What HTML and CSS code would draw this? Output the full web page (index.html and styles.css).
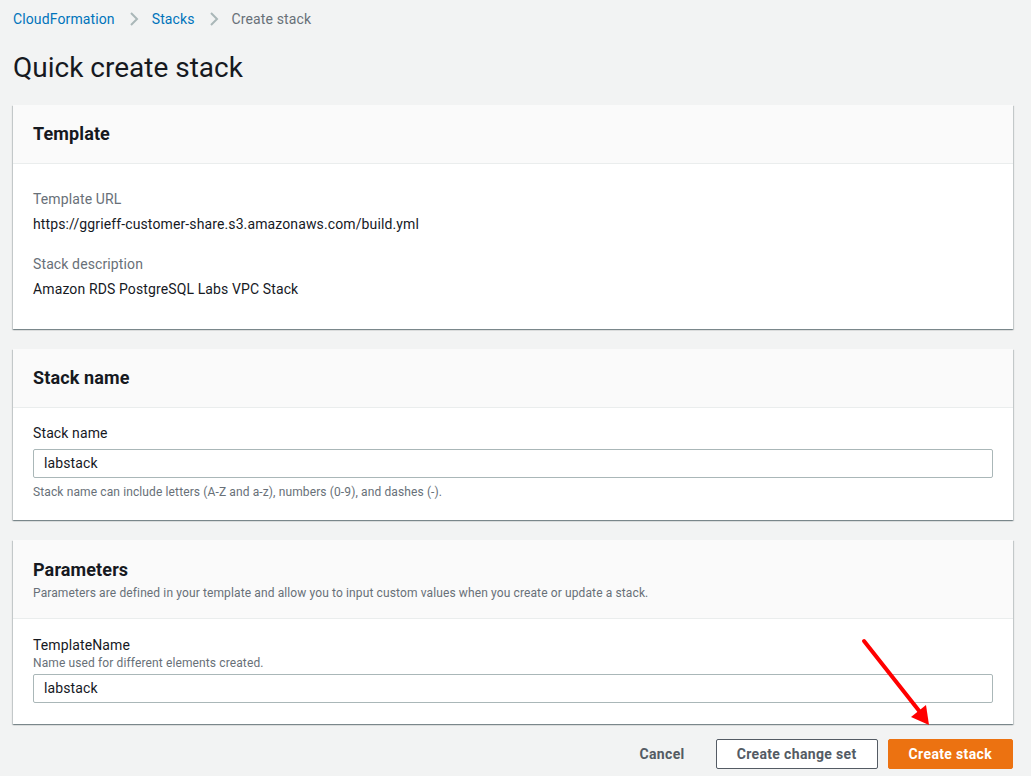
FILE: index.html
```html
<!DOCTYPE html>
<html lang="en">
<head>
<meta charset="utf-8">
<title>Quick create stack</title>
<link rel="stylesheet" href="styles.css">
</head>
<body>
<div class="page">
  <nav class="crumbs">
    <a class="crumb-link">CloudFormation</a>
    <svg class="chev" width="10" height="14" viewBox="0 0 10 14"><path d="M2 1l6 6-6 6" fill="none" stroke="#aab7b8" stroke-width="2"/></svg>
    <a class="crumb-link">Stacks</a>
    <svg class="chev" width="10" height="14" viewBox="0 0 10 14"><path d="M2 1l6 6-6 6" fill="none" stroke="#aab7b8" stroke-width="2"/></svg>
    <span class="crumb-current">Create stack</span>
  </nav>

  <h1 class="title">Quick create stack</h1>

  <section class="card">
    <div class="card-head"><h2>Template</h2></div>
    <div class="card-body kv">
      <div class="kv-item">
        <div class="kv-label">Template URL</div>
        <div class="kv-value">https://ggrieff-customer-share.s3.amazonaws.com/build.yml</div>
      </div>
      <div class="kv-item">
        <div class="kv-label">Stack description</div>
        <div class="kv-value">Amazon RDS PostgreSQL Labs VPC Stack</div>
      </div>
    </div>
  </section>

  <section class="card">
    <div class="card-head"><h2>Stack name</h2></div>
    <div class="card-body form">
      <div class="field-label">Stack name</div>
      <div class="input">labstack</div>
      <div class="hint">Stack name can include letters (A-Z and a-z), numbers (0-9), and dashes (-).</div>
    </div>
  </section>

  <section class="card">
    <div class="card-head params-head">
      <h2>Parameters</h2>
      <div class="head-desc">Parameters are defined in your template and allow you to input custom values when you create or update a stack.</div>
    </div>
    <div class="card-body form params-body">
      <div class="field-label">TemplateName</div>
      <div class="desc">Name used for different elements created.</div>
      <div class="input">labstack</div>
    </div>
  </section>

  <div class="actions">
    <button class="btn btn-link">Cancel</button>
    <button class="btn btn-normal">Create change set</button>
    <button class="btn btn-primary">Create stack</button>
  </div>

  <svg class="arrow" width="1031" height="776" viewBox="0 0 1031 776">
    <line x1="864" y1="641" x2="920" y2="712" stroke="#ff0000" stroke-width="4" stroke-linecap="round"/>
    <polygon points="929,725 911,717 926,705" fill="#ff0000"/>
  </svg>
</div>
</body>
</html>
```

FILE: styles.css
```css
* { box-sizing: border-box; }
html, body {
  margin: 0;
  padding: 0;
  background: #f2f3f3;
}
body {
  font-family: Roboto, "Open Sans", "Liberation Sans", sans-serif;
  color: #16191f;
  font-size: 14px;
  line-height: 20px;
  letter-spacing: 0.12px;
}
.page {
  position: relative;
  width: 1031px;
  height: 776px;
  padding: 9px 18px 0 13px;
  overflow: hidden;
}
.crumbs {
  display: flex;
  align-items: center;
  height: 20px;
  font-size: 14px;
}
.crumb-link { color: #0073bb; }
.crumb-current { color: #687078; }
.chev { margin: 0 13px 0 14px; }

.title {
  margin: 21px 0 19px;
  font-size: 28px;
  line-height: 36px;
  font-weight: 400;
  color: #16191f;
  letter-spacing: 0;
}

.card {
  background: #fff;
  box-shadow: 0 1px 1px 0 rgba(0,28,36,.3), 1px 1px 1px 0 rgba(0,28,36,.15), -1px 1px 1px 0 rgba(0,28,36,.15);
  margin-bottom: 20px;
}
.card-head {
  background: #fafafa;
  border-bottom: 1px solid #eaeded;
  padding: 18px 20px 18px;
}
.card-head h2 {
  margin: 0;
  font-size: 18px;
  line-height: 22px;
  font-weight: 700;
}
.params-head { padding: 19px 20px 17px; }
.head-desc {
  font-size: 12px;
  line-height: 16px;
  color: #687078;
  margin-top: 4px;
}
.card-body { padding: 25px 20px 30px; }
.kv-item + .kv-item { margin-top: 20px; }
.kv-label { color: #687078; margin-bottom: 5px; }
.kv-value { color: #16191f; }

.form { padding: 15px 20px 20px; }
.field-label { color: #16191f; margin-bottom: 6px; }
.input {
  height: 29px;
  border: 1px solid #aab7b8;
  border-radius: 2px;
  padding: 3px 10px;
  line-height: 21px;
  color: #16191f;
}
.hint {
  font-size: 12px;
  line-height: 16px;
  color: #687078;
  margin-top: 6px;
}
.params-body { padding: 16px 20px 21px; }
.params-body .field-label { margin-bottom: 0; }
.desc {
  font-size: 12px;
  line-height: 16px;
  color: #687078;
  margin-bottom: 3px;
}

.actions {
  display: flex;
  justify-content: flex-end;
  align-items: center;
  gap: 10px;
  margin-top: -5px;
}
.btn {
  font-family: inherit;
  font-size: 14px;
  font-weight: 700;
  height: 30px;
  padding: 0 20px;
  border-radius: 2px;
  cursor: pointer;
  letter-spacing: 0.35px;
}
.btn-link {
  background: transparent;
  border: 1px solid transparent;
  color: #545b64;
}
.btn-normal {
  background: #fff;
  border: 1px solid #545b64;
  color: #545b64;
}
.btn-primary {
  background: #ec7211;
  border: 1px solid #ec7211;
  color: #fff;
}
.arrow {
  position: absolute;
  left: 0;
  top: 0;
  pointer-events: none;
}
```
